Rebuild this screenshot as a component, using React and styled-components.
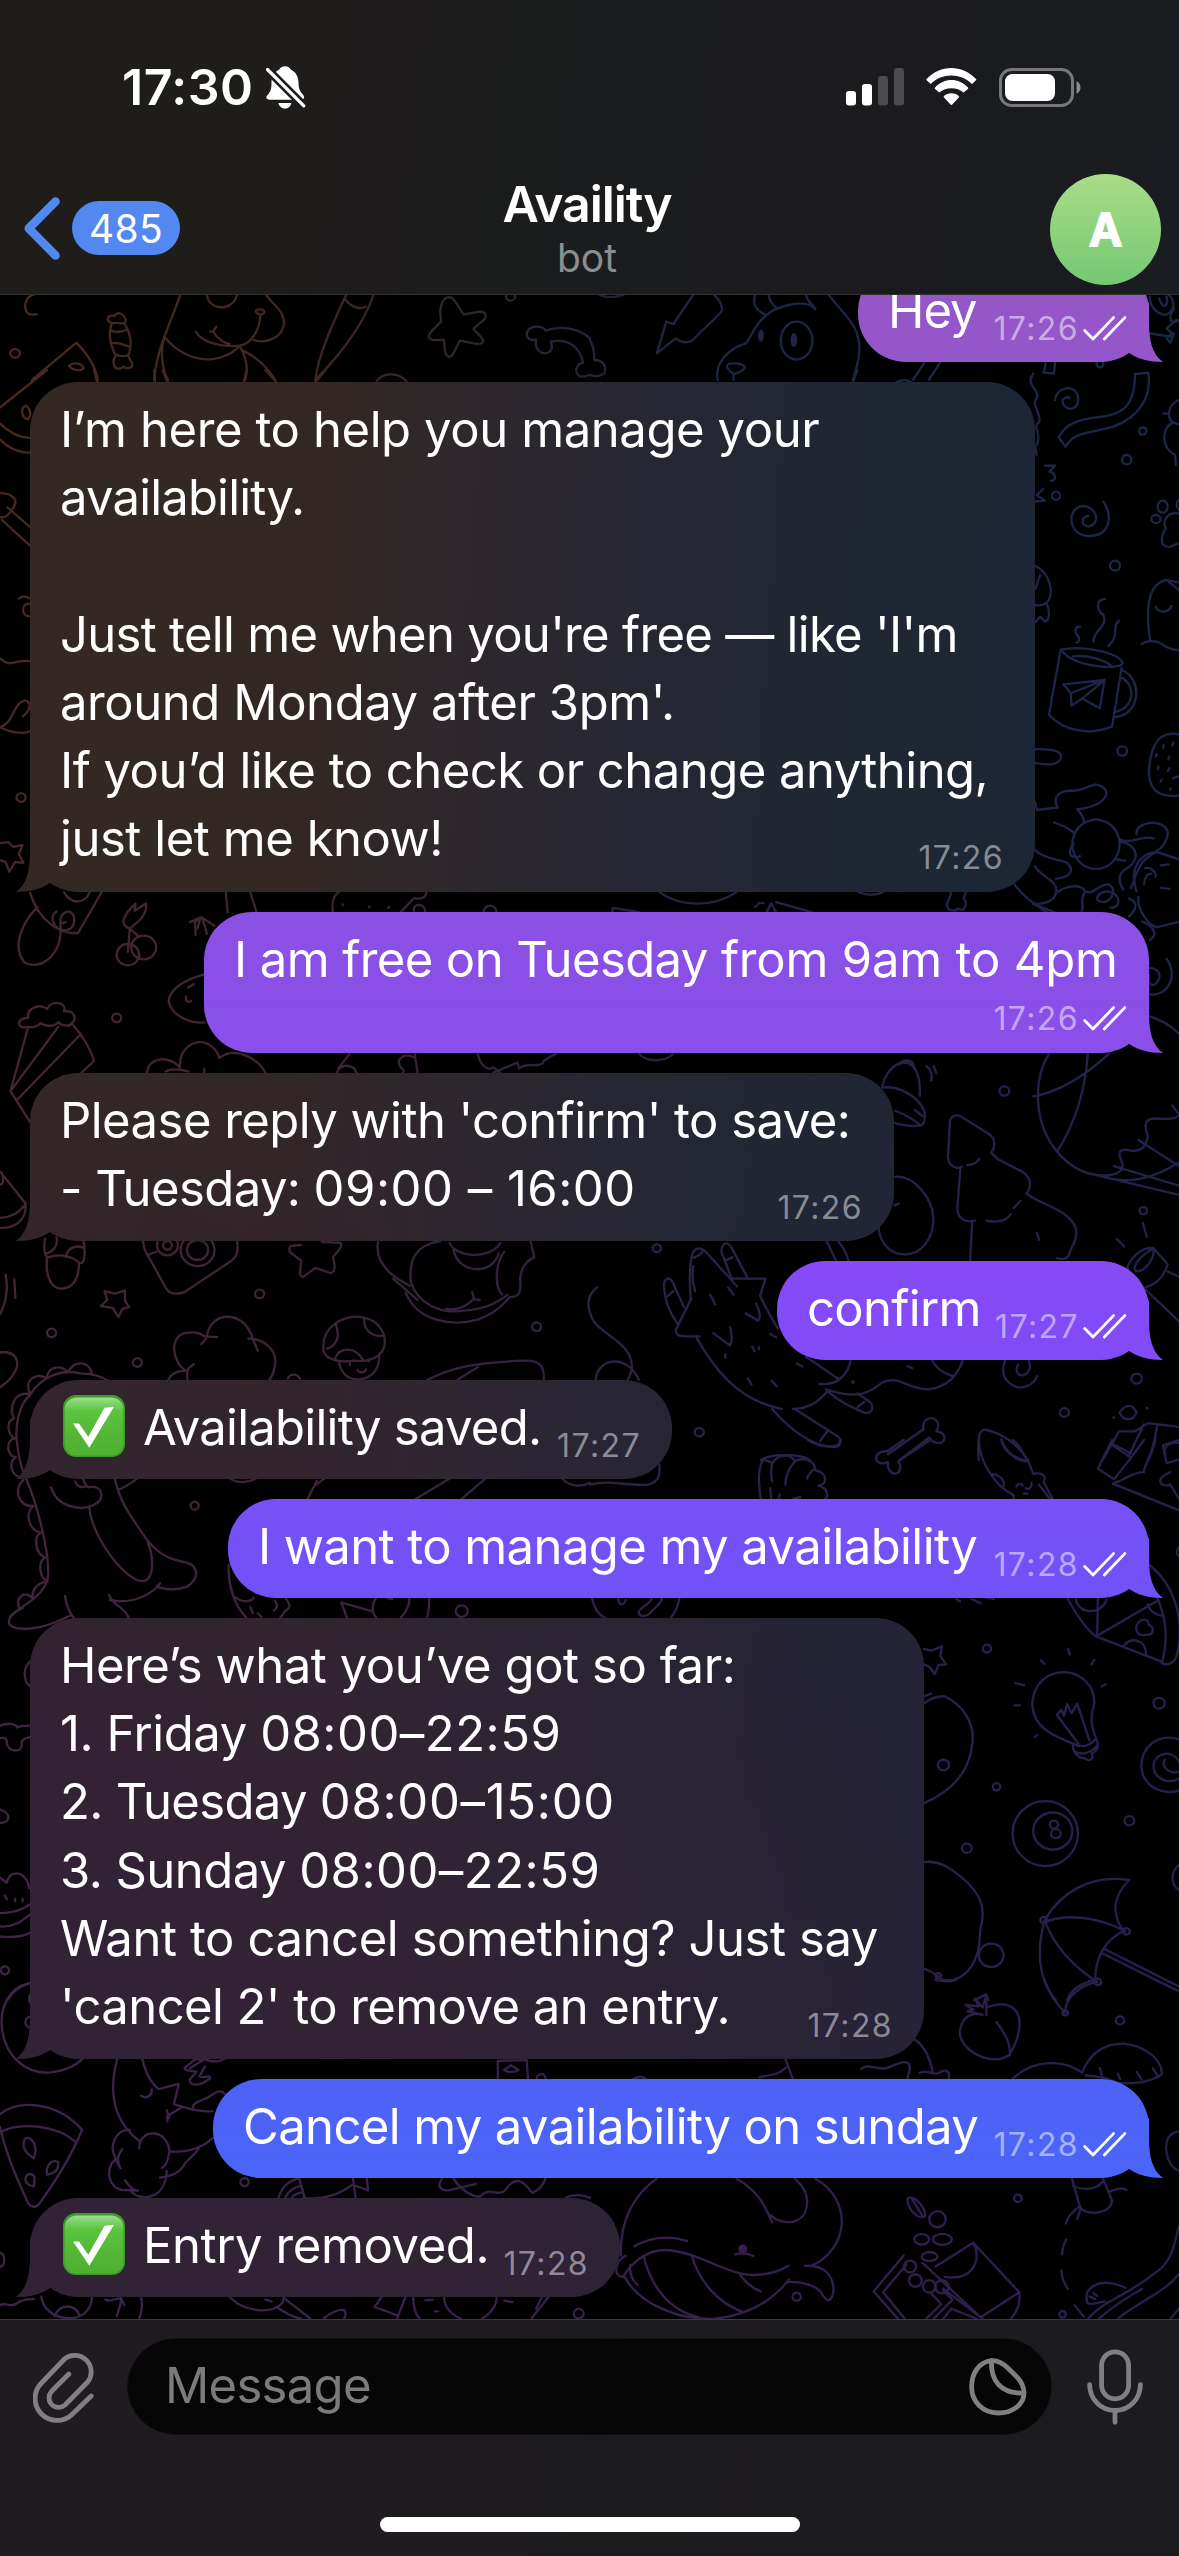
import React from "react";
import styled, { createGlobalStyle, css } from "styled-components";

const GlobalStyle = createGlobalStyle`
  * { box-sizing: border-box; }
  body {
    margin: 0;
    background: #000;
    color: #fff;
    font-family: Inter, "Liberation Sans", sans-serif;
  }
`;

/* ---------- wallpaper ---------- */

const LEFT_X = 0.37628;
const RIGHT_X = 0.37564;

/* Each tile is a patch of the doodle wallpaper with its own origin and scale. */
const TILES = [
  {
    at: [0, 0], scale: [LEFT_X, 1 / 3],
    d: `M90 884 C60 890 60 945 85 944 L97 943
    M290 965 C280 950 295 945 305 948 C310 935 325 940 330 950 C340 965 330 972 320 970 C305 965 300 975 290 965 M296 973 C288 1000 292 1030 305 1062 M330 970 C345 995 352 1030 342 1065 C330 1070 318 1070 305 1062 M293 990 C305 1000 325 995 335 990 M296 1030 C315 1025 330 1035 342 1040 M307 1068 C300 1080 300 1090 305 1100 C310 1110 325 1105 328 1100 C335 1108 350 1105 352 1095 C352 1085 345 1080 340 1068
    M85 1140 L203 1028 C235 1065 255 1105 260 1140 M183 1098 C195 1085 220 1090 222 1105 C215 1115 195 1112 183 1098
    M480 884 L437 1010 C420 1060 412 1100 410 1140 M437 1010 C425 1050 430 1110 447 1140 M437 1010 C470 1060 520 1080 560 1078 C590 1075 620 1060 636 1037 M550 884 C555 935 620 935 630 884 M520 995 C540 1030 590 1042 636 1037 M575 980 L566 995 L558 995 M566 995 C580 1020 600 1030 610 1032 M636 1037 C660 1035 690 1000 692 945 M680 935 C678 925 705 925 702 938 C698 948 685 945 680 935 M707 884 C725 915 755 930 755 970 C750 1020 700 1030 674 1020 M636 1037 C655 1070 660 1110 652 1140 M645 1052 C680 1070 710 1100 732 1140
    M920 884 C880 980 845 1070 838 1140 M993 884 C960 990 890 1080 842 1135 M916 895 C930 920 955 930 972 920
    M1170 935 C1172 890 1195 880 1210 905 L1232 943 L1275 935 C1295 935 1295 955 1280 965 L1258 987 L1282 1015 C1290 1030 1275 1035 1260 1030 L1222 1022 L1205 1060 C1195 1078 1185 1070 1182 1050 L1180 1020 L1150 1020 C1135 1015 1137 1005 1150 990 L1172 965 Z
    M1450 992 C1440 975 1405 975 1400 1000 C1400 1020 1415 1022 1425 1018 C1420 1050 1440 1062 1450 1060 C1470 1055 1468 1040 1464 1025 C1510 1015 1540 1040 1550 1088 C1525 1095 1525 1130 1550 1130 L1568 1125 M1450 992 C1490 975 1540 985 1568 1015`,
    rings: [[40, 1060, 13], [1357, 890, 12]],
  },
  {
    at: [590, 0], scale: [RIGHT_X, 1 / 3],
    d: `M25 884 C45 895 70 892 90 884 M0 1020 C10 1040 12 1060 12 1080 C35 1080 45 1100 38 1120 C30 1130 10 1130 0 1125
    M275 884 L222 972 L203 965 L178 1060 L228 1015 C245 1030 260 1030 275 1020 C285 1000 340 955 352 930 C350 905 340 895 330 884
    M440 884 C430 915 445 935 470 945 C440 970 430 1010 415 1030 C370 1045 330 1090 340 1140 M475 884 C478 905 490 920 500 925 M470 945 C500 915 560 905 585 915 L600 927 C590 910 578 905 575 884 M635 884 C665 930 710 970 715 1020 C722 1060 710 1100 700 1140 M382 1140 V1122 C365 1110 360 1095 370 1092 C390 1088 410 1092 412 1100 C410 1112 395 1120 382 1122
    M860 1140 L890 1088 M902 1140 L932 1088
    M1490 890 C1490 930 1530 960 1545 935 C1560 920 1550 890 1540 884 M1515 895 C1525 930 1540 920 1535 890 M1490 1000 L1545 1010 M1555 925 C1535 960 1550 975 1568 960 M1560 960 L1535 985 L1550 1000 L1535 1015 L1545 1028 L1555 1000`,
    rings: [[550, 1022, 42, 57]],
    spots: [[543, 1020, 9, 21], [455, 1007, 8, 18]],
  },
  {
    at: [0, 370], scale: [LEFT_X, 1 / 2.8],
    d: `M0 105 L125 0 M250 0 L258 34 M410 0 L412 34 M432 0 L445 34 M655 0 L648 34 M705 0 L735 34 M838 34 L865 0 M1000 34 C1015 5 1060 5 1082 34
    M0 150 C30 180 60 190 80 190 M0 195 C25 222 55 232 80 232 M68 100 C55 105 55 135 75 138 C85 125 80 105 68 100
    M0 345 C30 345 45 360 40 375 C30 400 15 415 0 412 M20 385 L80 440 M5 420 L80 492
    M50 640 C60 632 72 635 80 640 M80 655 C55 650 55 692 80 690 M0 808 C30 835 40 810 80 815
    M0 1000 C40 985 30 940 65 925 C85 925 82 955 60 970 M0 1000 C25 1015 60 1020 80 1012
    M22 1322 L35 1335 L60 1330 L50 1355 L62 1380 L40 1378 L25 1405 L15 1378 L0 1372 M0 1325 L22 1322`,
    rings: [[56, 1197, 12]],
  },
  {
    at: [590, 370], scale: [RIGHT_X, 1 / 2.8],
    d: `M700 34 L712 0 M815 34 C830 27 845 27 855 34
    M1253 783 L1222 965 C1260 1010 1330 1025 1390 998 L1415 835 M1253 783 C1310 770 1410 790 1418 822 C1410 840 1290 835 1253 783 M1285 802 C1320 797 1370 810 1392 832 M1415 840 C1470 860 1470 965 1397 972 M1412 860 C1455 880 1450 945 1400 957
    M1260 880 L1370 868 L1357 947 L1310 920 L1282 940 L1280 905 Z M1370 868 L1280 905 M1370 868 L1310 920 L1282 940
    M1185 1062 C1250 1060 1260 1075 1252 1090 C1240 1110 1210 1105 1185 1100
    M1568 1020 C1500 1005 1490 1080 1488 1130 C1490 1190 1530 1195 1568 1192 M1527 1050 L1525 1058 M1553 1043 L1550 1052 M1509 1075 L1506 1082 M1542 1082 L1540 1090 M1513 1110 L1512 1118 M1543 1115 L1538 1123 M1522 1147 L1519 1153 M1545 1172 V1176 M1552 1143 L1568 1137
    M1185 1210 L1190 1232 L1245 1225 C1235 1205 1235 1180 1280 1178 C1320 1180 1340 1150 1360 1165 C1390 1180 1375 1220 1297 1230 C1310 1245 1315 1255 1315 1265 M1235 1267 C1260 1275 1275 1285 1288 1295 M1410 1315 C1440 1330 1470 1300 1500 1312 M1455 1300 C1450 1260 1540 1255 1538 1300 C1530 1350 1490 1350 1470 1380 C1450 1410 1450 1430 1440 1450 M1288 1325 C1270 1350 1275 1370 1305 1362 M1400 1370 L1425 1374 M1410 1320 C1460 1330 1465 1370 1430 1395 C1400 1410 1410 1440 1420 1455 M1185 1345 C1210 1370 1250 1370 1270 1380 C1290 1400 1280 1420 1240 1425 M1185 1390 C1200 1420 1250 1430 1240 1465 C1235 1490 1210 1495 1180 1495 L1235 1518 M1130 1440 C1150 1470 1175 1490 1215 1518 M1240 1465 C1270 1440 1310 1440 1318 1460 C1345 1470 1350 1440 1380 1440 C1400 1450 1395 1480 1370 1490 C1335 1490 1350 1460 1380 1460 C1420 1470 1410 1510 1385 1505 M1318 1460 C1300 1490 1320 1500 1308 1518
    M1455 1460 C1430 1380 1480 1350 1510 1350 L1568 1370 M1460 1475 C1455 1510 1490 1560 1510 1560 L1568 1545 M1435 1480 C1460 1490 1455 1510 1435 1530 M1475 1440 C1475 1420 1485 1410 1495 1410 M1478 1395 C1495 1390 1510 1410 1505 1418 M1520 1387 L1540 1384 M1520 1450 L1543 1453
    M185 1462 C240 1505 330 1505 390 1462 M715 1462 C740 1472 760 1472 780 1462 M960 1462 C965 1480 940 1490 955 1510 C970 1518 978 1510 980 1508 C1000 1520 1005 1490 995 1480 L1000 1462 M440 1503 L450 1493 L462 1493 M470 1518 L482 1493 L495 1518 M495 1490 L590 1518 M60 1518 V1506 L130 1518`,
    rings: [[1417, 1067, 13], [1347, 1328, 63, 69]],
  },
  {
    at: [780, 290], scale: [1 / 3, 1 / 3],
    d: `M790 248 L822 250 L825 218 M797 218 L792 248 M760 250 C735 285 775 295 772 320 C750 345 785 370 778 395 C755 410 785 430 772 460 L765 470 L770 495
    M825 330 C830 285 895 280 895 330 C890 370 845 360 848 330 C855 318 870 320 868 325
    M1065 252 C1065 370 1010 375 930 385 C870 395 850 415 836 443 L857 470 C880 425 930 430 1000 410 C1080 380 1115 320 1105 248 Z
    M795 527 L825 527 L808 545 C830 550 830 575 812 572 M790 597 L770 615 L795 632 L765 635
    M970 635 C1000 680 990 740 925 738 C860 735 860 650 910 648 C950 650 965 700 925 710 C900 705 905 680 925 678
    M1197 670 C1160 665 1145 695 1158 715 C1140 740 1140 775 1170 770 L1197 760 M1197 630 C1188 635 1188 650 1197 660
    M1197 330 C1160 345 1160 385 1180 398 C1145 410 1140 470 1185 495 L1188 525 M1150 370 L1168 372 M1180 398 L1197 403
    M1110 1050 C1100 980 1095 880 1160 870 L1197 878 M1085 1062 C1100 1050 1130 1050 1150 1065 C1165 1075 1180 1080 1197 1080 M1127 950 C1135 970 1165 970 1175 948 M1165 875 L1197 900
    M767 828 C810 850 825 910 800 938 C785 950 770 945 767 945 M780 855 L767 895 M800 938 C810 965 810 990 795 995 L780 980 L767 995
    M975 927 C945 930 950 960 970 975 C985 1010 940 1020 940 1055 M1018 992 C995 1000 1020 1040 985 1068 M900 1010 C880 1010 885 1030 895 1040 C900 1050 895 1057 890 1058`,
    rings: [[960, 222, 10], [1088, 423, 11], [1040, 509, 14], [828, 617, 12], [1005, 827, 15], [1148, 650, 15, 18], [1128, 687, 14, 12]],
  },
  {
    at: [0, 900], scale: [LEFT_X, 1 / 2.8],
    d: `M80 -20 C100 50 150 95 207 93 L270 -22 M170 -22 C190 15 225 10 238 -20 M100 20 C60 60 30 130 65 175 C110 200 170 150 160 65 M175 62 C150 75 160 30 185 32 C205 45 200 80 175 85 C140 85 130 45 150 32
    M340 145 L345 80 C320 70 320 50 360 10 L358 30 L388 10 C392 40 370 60 345 80 L370 103
    M535 48 L570 72 M535 48 L505 62 M535 48 L518 62 L520 98 M532 52 L525 80 M538 52 L550 95
    M600 -22 L605 34 M665 -22 L682 34 M885 34 C880 0 890 -15 900 -22 M1065 34 L1100 -5 C1120 0 1135 -10 1132 -22 M1100 30 C1095 10 1130 5 1130 34 M1285 34 C1290 10 1315 10 1320 34 M910 12 L912 14 M980 18 L982 20 M1032 22 L1034 20
    M543 208 C500 220 450 245 448 285 C460 330 510 345 543 343 M500 245 L515 235 M495 270 C490 285 505 288 508 282
    M75 355 L28 535 L80 622 M190 345 C220 380 240 415 250 450 L215 485 M75 355 C45 365 40 330 75 330 C70 300 110 290 125 305 C140 275 180 290 170 312 C200 305 205 340 190 345 C185 358 160 350 155 342 C140 360 115 350 108 345 C100 355 85 358 75 355 M155 355 L28 535 M215 375 L45 560
    M390 484 C395 440 445 435 475 465 M440 480 C455 470 480 475 500 480 M478 470 C475 410 520 390 550 402 C575 415 580 430 583 442 C630 405 690 450 705 484 M543 472 V484
    M895 484 C905 455 940 460 948 484 M900 470 L930 430 M1070 484 C1080 470 1060 480 1060 450 C1070 430 1090 435 1098 440 M1102 430 L1110 484 M1270 430 C1275 465 1300 480 1310 468 L1330 484 M1310 484 L1375 455 L1380 472 C1400 450 1440 475 1445 450 L1478 430
    M0 760 L68 850 C72 900 35 920 0 918 M68 850 C50 880 20 890 0 890 M0 795 C10 800 10 780 5 765
    M120 948 C115 975 118 1000 130 1000 C155 990 190 995 210 1015 C225 1025 228 990 222 955 M125 1005 C120 1060 140 1090 165 1088 C200 1085 210 1050 210 1015 M150 945 C155 970 140 985 122 990 M175 1000 C180 970 205 965 225 975 M15 1050 C22 1090 15 1130 0 1160 M38 1062 L41 1115
    M380 955 L385 980 L440 1085 C450 1105 470 1105 490 1098 L615 1010 C635 995 632 970 630 955 M390 995 L415 985
    M268 1137 L285 1120 L278 1095 L305 1102 L332 1093 L332 1122 L343 1140 L325 1145 L315 1168 L300 1142 Z
    M855 957 L905 960 C910 970 905 975 885 1000 C888 1020 895 1035 880 1045 L838 1030 L805 1056 C790 1050 800 1035 800 1010 L770 985 C765 965 775 968 800 966
    M1005 955 C995 1010 1030 1050 1090 1080 M1170 955 C1110 965 1085 1000 1092 1070 C1110 1130 1170 1160 1230 1150 C1300 1145 1330 1120 1350 1105 M1078 1100 C1110 1180 1200 1195 1270 1175 C1320 1155 1340 1130 1355 1112 C1385 1112 1385 1090 1382 1060 C1385 1030 1400 1010 1420 1000 L1410 955 M1340 985 C1320 1010 1310 1080 1335 1105 M1195 960 C1210 1000 1300 1010 1330 960 M1205 980 C1220 1050 1310 1050 1325 990 M1255 1098 L1260 1118 L1275 1120 M1260 1115 C1240 1140 1210 1150 1185 1145 M1045 1060 L1110 1120
    M498 1344 C495 1315 500 1310 515 1300 M495 1318 C460 1300 445 1220 495 1212 C520 1208 530 1212 545 1222 L577 1224 M550 1225 L535 1243 M550 1220 C560 1150 650 1145 672 1230 L685 1262 M660 1228 C700 1228 740 1260 730 1305 C728 1325 722 1335 715 1344 M447 1344 C455 1325 475 1318 495 1318 M765 1340 C770 1325 790 1325 797 1340
    M860 1265 C850 1190 920 1160 960 1168 C1010 1175 1030 1220 1020 1255 C1010 1285 970 1295 940 1290 C910 1295 870 1290 860 1265 M892 1188 C905 1220 895 1250 868 1256 M968 1170 C965 1205 990 1225 1020 1220 M890 1285 C900 1255 940 1245 965 1288 M900 1290 C905 1330 930 1344 955 1342 C990 1340 1010 1310 1008 1270 M930 1298 V1302 M980 1286 V1292 M950 1316 C955 1325 970 1325 973 1314
    M1135 1344 C1200 1310 1260 1295 1390 1290 C1430 1288 1448 1300 1445 1344 M1270 1308 L1215 1344 M0 1267 C40 1262 55 1290 40 1320 C30 1345 10 1355 0 1365`,
    rings: [[340, 153, 30], [382, 133, 33], [310, 330, 12], [445, 967, 28], [445, 967, 12], [525, 980, 45], [525, 980, 28], [137, 1212, 12], [690, 1103, 12], [365, 1295, 12], [1426, 1195, 12]],
  },
  {
    at: [0, 1340], scale: [1 / 3, 1 / 3],
    d: `M90 165 C60 190 45 250 50 300 C55 350 65 390 80 420 C110 490 145 620 145 700 C140 770 70 790 30 830 M90 165 C120 115 180 85 240 100 C280 100 305 110 325 122
    M90 160 C70 120 110 95 140 115 C145 75 185 75 205 98 C220 55 275 65 275 103 M85 162 C45 155 25 200 42 235 C15 245 25 290 45 295 C15 300 20 350 48 352 C25 360 30 410 65 412 M70 420 C40 450 55 500 100 498 C75 520 85 570 122 578 C100 590 105 640 135 652 C115 665 115 710 143 725 M140 725 C110 730 95 750 98 775 C75 750 45 770 58 805
    M153 442 C170 500 240 515 280 495 C315 480 310 440 275 440 C265 445 255 440 250 418 M225 425 C232 440 245 445 260 438
    M267 500 C275 580 350 690 410 720 C440 730 450 715 455 690 C460 650 450 625 440 598 M345 418 C360 490 400 540 440 598 C480 650 520 660 560 668 C600 680 595 720 560 740 C530 752 500 750 470 740 L480 730 M475 738 C430 780 380 790 330 780 M327 765 C340 800 375 800 387 835 M195 768 C200 800 210 820 222 835 M355 450 C375 440 395 430 410 417`,
    rings: [[584, 497, 12]],
  },
  {
    at: [590, 900], scale: [RIGHT_X, 1 / 2.8],
    d: `M1488 210 C1485 240 1500 245 1510 230 C1525 210 1510 190 1488 190 M1535 165 C1565 205 1545 270 1488 265 M1488 325 C1520 335 1550 355 1568 375 M1470 60 C1500 75 1515 95 1490 112 M130 430 C150 455 200 455 222 430
    M778 520 C790 480 810 455 840 455 C870 460 880 500 878 548 M825 460 C830 445 860 445 862 465 M778 525 C820 520 870 545 890 590 C895 625 885 632 875 632 C850 635 830 630 812 625 M812 590 C840 600 870 620 880 632 M865 588 L885 605 M895 465 C908 475 912 490 908 505 M915 465 L922 485
    M958 620 C962 600 980 600 990 608 L1062 655 C1080 670 1080 690 1068 708 L1085 725 L1140 755 C1175 770 1178 800 1162 822 C1200 855 1290 870 1295 930 C1295 960 1275 980 1275 995 C1265 1010 1255 1005 1243 1003 M958 620 L953 720 C955 745 975 755 990 747 M1005 742 C1020 742 1030 735 1037 724 M986 752 L978 860 C978 890 995 905 1025 898 M1055 898 C1090 905 1110 895 1120 880 M1128 862 L1146 842 M1017 905 L1012 1010 M1190 932 L1196 952
    M812 775 C860 770 910 830 914 890 C915 950 880 995 835 992 C790 990 770 950 768 915 M810 855 L822 850
    M1222 430 C1180 500 1180 620 1240 700 C1270 740 1310 765 1350 770 C1390 775 1420 765 1418 740 C1410 720 1400 695 1430 700 C1470 710 1480 690 1485 660 C1470 620 1485 610 1510 612 C1545 615 1565 610 1568 600 M1325 430 C1320 530 1290 630 1243 705 M1180 550 C1260 535 1330 480 1382 430 M1350 770 C1430 800 1500 780 1568 735 M1395 745 L1568 800 M1340 768 L1568 826 M1460 672 L1568 745 M1550 575 L1568 600
    M1430 1030 C1440 1000 1470 970 1500 975 L1538 1020 C1530 1050 1510 1075 1478 1085 M1430 1030 L1445 1060 M1500 975 C1505 1000 1480 1040 1455 1040 C1440 1030 1460 1000 1500 975 M1538 1040 L1568 1055 M1478 1090 L1568 1180 M1403 950 L1422 970 M1472 905 L1482 943
    M197 1085 C195 1055 215 1055 220 1070 L250 1140 M197 1085 C200 1130 215 1160 232 1185 M205 1110 L222 1095 M270 1115 L228 1205 C230 1220 240 1222 255 1222 L292 1222 M268 1115 C265 1070 265 1010 275 985 C285 970 300 975 308 985 L392 1082 M270 1000 C280 1005 300 990 300 980 M275 1025 C270 1060 275 1080 280 1095 M375 1060 L467 1060 L453 1108 C470 1150 490 1180 500 1200 M378 1062 L350 985 C350 960 365 955 375 970 L418 1055 M360 1010 L380 1000 M285 1228 C330 1310 390 1400 510 1425 M320 1105 L333 1132 M368 1085 L382 1105 M415 1158 L448 1178 C455 1170 452 1150 442 1130 M328 1212 L372 1247 C378 1240 378 1220 373 1197 M480 1215 L495 1224 M432 1250 L438 1264 M450 1253 V1258 M360 1272 V1282 M420 1340 L430 1356 M483 1345 L497 1362 M550 1298 L565 1306 M575 1280 C610 1300 640 1330 665 1342 M695 1287 C685 1330 660 1360 610 1355 M540 1425 C580 1425 610 1405 632 1375 M628 1370 C720 1400 740 1380 780 1350 C830 1330 840 1370 900 1370 C950 1365 980 1330 993 1287 M910 1287 C920 1310 940 1325 965 1333 M845 1305 L858 1311 M632 1375 C660 1400 690 1420 735 1437 C755 1435 755 1415 745 1405 L712 1382 M712 1420 L730 1405 M485 1425 C530 1480 590 1530 650 1532 C670 1530 670 1510 660 1502 L545 1425 M613 1515 C620 1505 625 1495 632 1488
    M18 1085 C-10 1110 -10 1140 10 1180 C50 1230 110 1240 112 1310 C108 1330 105 1335 100 1344 M15 1344 C20 1280 100 1270 130 1344
    M1140 1300 C1130 1320 1140 1335 1155 1330 C1175 1320 1172 1300 1168 1290 M1105 1290 C1085 1340 1130 1375 1160 1362 C1180 1355 1185 1345 1190 1333 M630 955 L655 1010 M660 955 C680 980 685 995 688 1010
    M888 1482 C882 1455 905 1445 920 1455 C930 1465 928 1480 922 1487 C945 1490 950 1510 935 1520 C915 1522 908 1515 903 1505 L825 1568 M888 1482 L793 1552
    M1035 1512 C1035 1485 1050 1480 1060 1485 C1100 1495 1140 1525 1165 1568 M1095 1510 C1100 1540 1120 1560 1165 1572 M1035 1512 C1033 1530 1033 1550 1035 1568
    M1410 1435 C1425 1410 1445 1410 1455 1435 C1445 1460 1420 1460 1410 1435 M1365 1568 L1408 1488 L1450 1488 L1485 1465 L1568 1475 M1510 1470 C1505 1500 1500 1540 1485 1568 M1475 1468 L1435 1555 M1385 1520 L1440 1550 M1568 1520 C1540 1515 1525 1535 1530 1550 M1393 1448 L1395 1450 M1482 1422 L1484 1424 M455 1568 C480 1550 560 1550 585 1568`,
    rings: [[1103, 535, 13], [1473, 870, 10], [178, 975, 11], [1455, 1340, 14], [1263, 1435, 12], [291, 1490, 12], [700, 1350, 2]],
  },
  {
    at: [0, 1440], scale: [LEFT_X, 1 / 2.8],
    d: `M190 490 C150 510 100 535 45 527 C10 520 20 490 60 470 M80 620 C60 640 62 675 80 690
    M0 800 C20 790 45 795 45 805 C55 800 70 800 80 800 M0 835 C15 830 20 840 18 850 C25 875 55 875 58 855 C55 840 65 835 80 832 M0 1035 C30 1045 30 1070 0 1073
    M0 1225 L18 1240 C25 1200 70 1205 78 1255 M0 1325 C30 1325 60 1315 80 1300 M0 1362 C40 1365 60 1345 80 1328 M0 1390 C40 1395 60 1390 80 1380 M12 1275 L18 1285 M40 1285 V1292 M60 1285 V1292 M80 1520 C50 1530 30 1550 20 1568
    M608 350 C605 400 620 460 655 498 M625 440 C650 460 670 450 675 441 M760 445 C775 465 770 470 755 482 L745 498 M730 450 C740 460 735 475 728 477 M665 468 L672 485 M685 485 L695 495 M907 455 L990 480 M907 455 L922 498 M1000 498 C985 480 990 455 1000 441 M1025 441 L1042 446 M1140 441 C1142 470 1138 485 1135 498 M1065 498 C1080 480 1088 465 1088 445
    M612 108 C630 122 660 120 680 108 M817 165 L842 115 M840 125 L862 108 M1105 165 L1195 108 M1227 165 L1290 108 M1495 108 C1510 130 1545 132 1568 120`,
    rings: [[13, 1485, 11], [1227, 479, 16]],
  },
  {
    at: [590, 1440], scale: [RIGHT_X, 1 / 2.8],
    d: `M0 125 C50 110 100 130 155 125 C190 115 185 90 185 70 M580 0 C610 20 640 20 660 15 L668 0
    M455 165 C445 110 450 60 465 55 L485 65 C500 40 535 35 545 60 C570 45 600 60 600 85 C630 90 635 125 608 128 C635 135 635 160 625 165 M485 65 C480 90 483 110 485 115 M545 60 C525 85 520 110 520 125 M600 80 C585 90 580 100 578 108 M480 135 L482 165 M505 152 L503 165 M540 165 L560 160
    M790 32 C770 30 755 45 765 60 C775 70 785 65 793 62 C790 90 810 100 822 90 C830 75 825 65 820 60 L905 0 M790 32 L835 0
    M1035 0 C1035 60 1080 130 1128 155 V165 M1095 0 C1110 40 1140 60 1165 60 C1150 30 1140 10 1125 0 M1165 55 L1180 95 C1205 90 1215 100 1208 118 L1232 165 M1195 125 L1225 165 M1070 95 C1100 100 1105 120 1100 130 M1135 130 C1140 120 1150 122 1152 128 M1175 120 C1178 135 1165 140 1160 135 M1155 150 L1165 150
    M1390 0 L1352 80 L1395 110 L1440 50 M1385 10 L1440 50 L1475 0 M1505 0 C1495 50 1470 80 1475 90 C1440 90 1430 110 1392 122 L1568 197 M1525 15 L1568 0 M1525 15 L1535 65 L1568 55 M1545 90 C1500 110 1520 135 1545 125 L1568 165
    M1270 441 C1290 480 1320 530 1347 550 L1525 622 M1347 550 L1510 450 M1350 550 L1352 441 M1293 445 C1300 490 1360 490 1375 448 M1490 350 C1550 400 1590 500 1560 610 C1550 630 1530 630 1522 625 C1540 560 1535 500 1510 441 M1420 578 C1435 550 1480 555 1480 600 M1485 460 C1490 480 1505 490 1525 492 M1455 520 C1465 495 1490 500 1487 517 C1505 525 1500 550 1480 545 C1465 550 1450 540 1455 520
    M975 445 L985 452 M1015 445 L1040 457 M1055 441 L1075 445 M889 585 L908 590 L937 578 L933 605 L948 628 L928 630 L918 655 L903 635 L889 628
    M1285 850 C1240 830 1180 810 1177 740 C1180 680 1220 650 1262 650 C1310 652 1345 690 1342 740 C1330 780 1335 800 1347 835 M1285 850 C1310 865 1335 855 1347 835 C1360 860 1345 875 1335 878 C1345 895 1325 900 1320 892 C1290 890 1285 865 1285 850 M1290 872 C1310 885 1335 875 1350 855 M1300 850 L1243 770 L1255 755 L1262 772 L1270 740 L1282 765 L1297 738 L1330 842
    M1200 616 L1210 627 M1273 585 L1277 600 M1343 615 L1335 628 M1132 681 L1155 686 M1362 690 L1373 684 M1130 743 H1145 M1185 832 L1190 825
    M889 737 C905 725 925 715 945 718 C990 740 1025 790 1018 850 C1010 930 960 985 889 1017 M889 718 L908 710
    M1568 838 C1510 820 1465 860 1468 920 C1475 970 1520 995 1568 982 M1568 948 C1540 965 1500 950 1500 910 C1505 875 1550 865 1568 900 M1568 930 C1540 935 1520 915 1530 895
    M889 1182 C930 1175 960 1200 990 1225 C1040 1270 1055 1310 1040 1365 C1035 1395 1040 1420 1030 1440 C1015 1490 980 1520 940 1512 C920 1500 920 1490 889 1480
    M1435 1232 C1330 1215 1250 1270 1210 1345 C1190 1420 1190 1510 1240 1568 M1435 1232 C1390 1280 1390 1330 1420 1375 C1380 1395 1345 1440 1345 1510 C1310 1520 1280 1540 1270 1568 M1210 1350 C1270 1325 1350 1335 1425 1375 M1213 1352 C1235 1410 1280 1470 1350 1517 M1370 1425 L1568 1530 M1365 1438 L1560 1540 M1568 1190 C1545 1210 1545 1245 1568 1260 M1568 300 C1560 310 1560 320 1568 325
    M5 441 C10 470 25 490 40 498 M75 441 C75 465 90 465 95 448 M130 480 C140 465 165 455 165 441 M130 480 C130 498 150 495 160 485 C175 465 190 460 192 441 M238 441 C235 470 225 485 215 498 M1022 1568 L1040 1560 L1055 1552 L1060 1568`,
    rings: [[1057, 584, 11], [1515, 737, 15], [941, 910, 15], [1082, 971, 10], [1436, 1066, 13], [1003, 1143, 13], [1212, 1102, 87, 91], [1232, 1095, 52], [1235, 1077, 11], [1240, 1102, 13], [1068, 1443, 33], [927, 1500, 7], [1208, 1344, 9], [1428, 1376, 9], [1352, 1517, 9]],
  },
  {
    at: [0, 1980], scale: [LEFT_X, 1 / 2.722],
    d: `M80 8 C20 20 0 80 5 130 C15 220 80 255 130 252 C170 248 200 235 220 214 M80 40 C75 50 78 60 80 62 M80 100 C65 100 62 125 80 130
    M0 365 C50 325 150 330 218 408 C190 480 140 560 105 608 C95 622 85 620 75 608 C50 550 20 490 0 400 M0 415 C50 385 150 395 200 440 M65 435 C75 420 95 440 95 465 L90 485 C75 475 55 460 65 435 M125 530 C120 500 145 485 155 497 C155 520 145 525 125 530 M68 540 C70 525 90 525 92 540 L90 562 C75 560 65 550 68 540
    M312 214 C280 330 320 400 372 440 M378 214 C385 245 400 280 422 297 L475 283 L462 338 C500 350 530 360 565 357 M375 315 C390 325 405 315 403 298 M485 345 L445 370 L445 385 M443 355 L450 375 M370 458 C370 400 450 405 450 470 C445 480 450 500 430 512 M345 408 C310 405 290 450 305 480 C310 500 318 505 320 512 M325 460 C310 480 310 495 320 512 M305 490 C280 510 285 570 330 572 L367 573 M332 545 C345 565 355 575 367 573 M345 572 C370 605 440 600 443 520 M450 467 C500 470 540 455 565 430 M530 455 C510 490 500 480 485 510 C475 525 450 535 425 538 M512 350 C510 330 540 330 560 315 C580 300 590 300 597 310
    M490 240 L520 215 L540 218 L505 240 M490 240 C495 250 510 245 522 250 L505 270 C500 285 525 295 558 268 C560 255 535 270 530 262 L545 235 M545 216 C565 225 580 225 597 214 M0 742 C15 748 15 775 0 782
    M1323 269 V220 L1400 218 L1403 269 M1340 245 L1358 232 L1378 245 C1365 252 1350 252 1340 245 M1427 269 C1425 252 1450 252 1450 269
    M740 593 C750 560 770 545 795 540 M758 593 C765 575 780 565 800 560 M775 593 C782 583 790 580 803 578 M795 540 L810 593 M805 593 C860 600 900 585 940 555 M938 540 L945 593 M975 540 L978 573 L945 560 M1175 540 C1160 560 1170 575 1195 572 L1265 555 M1205 540 C1220 565 1250 590 1275 590 C1300 560 1320 590 1340 575 C1370 530 1390 545 1415 580 C1435 570 1445 555 1450 540 M1503 593 C1520 583 1550 583 1568 593
    M0 885 C20 875 25 895 45 880 C60 868 75 870 90 868 M110 862 C115 930 240 950 245 862 M145 915 C160 880 200 880 212 915 M280 870 C300 880 310 860 322 870 C320 890 315 900 310 915 M320 862 L330 885 M375 862 C380 890 375 905 370 922 M610 862 C650 905 720 910 750 880 L755 862 M757 868 L825 922 M735 890 C770 915 790 920 800 922 M705 870 L722 875 M860 922 C880 905 890 900 905 898 C920 895 920 910 915 922 M1015 862 L995 890 L1055 912 M1078 862 L1055 922 M1098 862 C1098 890 1105 910 1115 922 M1180 862 C1180 890 1200 910 1225 922 M1320 862 C1320 890 1300 910 1280 922 M1130 872 L1150 870 M1155 902 H1165 M1340 873 L1362 877 M1458 862 L1412 922 M1440 862 L1425 895`,
    rings: [[650, 550, 11], [1538, 908, 13]],
  },
  {
    at: [590, 1980], scale: [RIGHT_X, 1 / 2.722],
    d: `M520 214 L540 269 M450 265 C480 258 500 260 522 238 M722 242 C740 225 760 245 790 240 C815 230 840 215 850 230 C855 250 845 260 845 269 M865 162 C895 185 905 215 912 250 M878 252 C900 245 900 255 925 255 C945 240 960 245 955 269
    M1045 95 C1000 80 975 130 988 160 C1010 210 1080 230 1115 205 C1150 150 1150 100 1130 80 C1110 60 1080 65 1055 75 M1045 95 L1005 85 L1020 80 L1000 68 L1035 72 L1025 50 L1045 75 L1055 42 L1055 95 M1082 115 C1110 150 1120 180 1118 205
    M1210 0 C1220 30 1240 65 1265 88 C1265 50 1300 15 1350 5 M1505 0 L1568 30 M920 0 C940 5 960 5 975 0
    M1125 269 C1180 215 1260 215 1310 252 C1330 200 1370 172 1420 173 C1480 178 1525 220 1522 257 C1480 285 1420 285 1380 275 M1320 260 C1350 262 1370 265 1395 275 M1358 240 L1363 262 M1455 250 L1468 270 M1498 240 L1510 258 M1405 255 L1412 270 M115 269 C130 262 140 262 150 269
    M178 540 C110 590 80 660 82 750 M390 540 C440 570 460 600 485 660 M480 640 C510 670 580 670 578 600 C575 570 560 555 545 540 M600 540 C700 600 690 730 590 778 M572 778 C620 775 650 800 648 850 C640 885 625 870 615 850 C600 830 560 820 525 822 M118 725 C160 700 210 695 258 710 M95 750 C60 770 65 810 88 808 C110 770 150 735 200 735 C290 740 360 800 430 803 C480 803 510 790 528 778 M92 808 C130 880 230 925 330 922 C410 915 480 880 530 815 M107 775 C105 800 115 820 127 830 M143 750 C160 830 210 900 290 918 M270 748 C290 820 340 880 410 905 M400 803 C415 825 435 840 455 848 M387 747 C400 742 420 745 435 751
    M845 595 C860 580 895 620 892 642 C880 655 845 630 845 595 M858 598 L884 640
    M835 750 L755 848 L820 922 M842 775 L780 850 L838 922 M920 780 L1020 715 L1143 850 L1040 918 L885 770 M1020 715 C1045 760 1020 820 945 808 M1143 850 C1145 880 1140 900 1120 922 M940 845 L965 870 L915 922 M905 850 L935 882 L895 922 M962 895 L1030 922 M962 895 L940 922 M940 840 L1045 922
    M1283 540 L1305 620 C1320 640 1385 640 1390 600 L1365 540 M1285 560 C1320 575 1350 570 1368 545 M1380 578 C1400 568 1415 565 1428 571 M1305 615 C1285 630 1270 645 1267 663 M1307 620 L1297 650 M1268 707 C1260 720 1257 735 1257 747 M1255 790 C1255 810 1265 830 1272 840 M1290 885 L1315 917 M1325 922 C1370 870 1430 860 1500 800 C1550 770 1555 720 1568 670 M1355 922 C1400 880 1440 860 1470 840 M1405 922 C1470 870 1530 850 1568 800 M1325 880 C1310 840 1350 820 1385 825 C1400 828 1415 832 1425 838 M1325 880 C1335 885 1345 880 1370 875 M1330 862 L1345 868 M1340 852 L1350 860 M1545 922 L1568 895
    M1568 412 C1540 415 1530 440 1535 470 C1540 500 1555 515 1568 520`,
    rings: [[1411, 110, 11], [1265, 89, 7], [550, 862, 11], [1139, 594, 10], [1258, 910, 9], [925, 651, 22], [883, 706, 20, 14], [938, 706, 25, 15], [904, 753, 21, 12], [852, 780, 16], [866, 818, 17], [903, 834, 17], [937, 835, 18]],
    spots: [[407, 732, 12, 12]],
  },
];

const WallpaperSvg = styled.svg`
  position: absolute;
  inset: 0;
  width: 100%;
  height: 100%;
`;

function Wallpaper() {
  return (
    <WallpaperSvg viewBox="0 295 1179 2024" aria-hidden="true">
      <defs>
        <linearGradient id="warm" x1="0" x2="1" y1="0" y2="0">
          <stop offset="0" stopColor="#48291f" />
          <stop offset="0.3" stopColor="#3b2624" />
          <stop offset="0.48" stopColor="#252338" />
          <stop offset="0.65" stopColor="#1d2542" />
          <stop offset="1" stopColor="#1c2748" />
        </linearGradient>
        <linearGradient id="cool" x1="0" x2="1" y1="0" y2="0">
          <stop offset="0" stopColor="#3e2449" />
          <stop offset="0.55" stopColor="#37204c" />
          <stop offset="1" stopColor="#281e4f" />
        </linearGradient>
        <linearGradient id="fade" x1="0" x2="0" y1="0" y2="1">
          <stop offset="0.05" stopColor="#000" />
          <stop offset="0.9" stopColor="#fff" />
        </linearGradient>
        <mask id="fadeMask" maskUnits="userSpaceOnUse" x="0" y="295" width="1179" height="2024">
          <rect x="0" y="295" width="1179" height="2024" fill="url(#fade)" />
        </mask>
        <mask id="doodles" maskUnits="userSpaceOnUse" x="0" y="295" width="1179" height="2024">
          <g fill="none" stroke="#fff" strokeWidth="2.3" strokeLinecap="round" strokeLinejoin="round">
            {TILES.map((t, i) => (
              <g key={i} transform={`translate(${t.at[0]} ${t.at[1]}) scale(${t.scale[0]} ${t.scale[1]})`}>
                <path d={t.d} vectorEffect="non-scaling-stroke" />
                {t.rings.map(([cx, cy, rx, ry], k) => (
                  <ellipse key={k} cx={cx} cy={cy} rx={rx} ry={ry || rx} vectorEffect="non-scaling-stroke" />
                ))}
                {(t.spots || []).map(([cx, cy, rx, ry], k) => (
                  <ellipse key={k} cx={cx} cy={cy} rx={rx} ry={ry} fill="#fff" stroke="none" />
                ))}
              </g>
            ))}
          </g>
        </mask>
      </defs>
      <g mask="url(#doodles)">
        <rect x="0" y="295" width="1179" height="2024" fill="url(#warm)" />
        <rect x="0" y="295" width="1179" height="2024" fill="url(#cool)" mask="url(#fadeMask)" />
      </g>
    </WallpaperSvg>
  );
}

/* ---------- shell ---------- */

const Screen = styled.main`
  width: 1179px;
  height: 2556px;
  display: flex;
  flex-direction: column;
  overflow: hidden;
  background: #000;
`;

const Header = styled.header`
  flex: none;
  height: 295px;
  border-bottom: 1px solid #313132;
  background: linear-gradient(97deg, #1e1d1b 0%, #1e1d1a 24%, #1e1b1d 33%, #1c1c1c 38%, #1b1c1e 58%, #1b1b1f 78%, #191c20 100%);
`;

const StatusBar = styled.div`
  height: 174px;
  padding: 0 98px 0 122px;
  display: flex;
  align-items: center;
  justify-content: space-between;
`;

const StatusGroup = styled.div`
  display: flex;
  align-items: center;
  gap: ${(p) => p.$gap}px;
`;

const Clock = styled.time`
  font-size: 50px;
  font-weight: 600;
  line-height: 60px;
  letter-spacing: 0.5px;
`;

const NavBar = styled.nav`
  height: 120px;
  padding: 0 18px 9px 24px;
  display: grid;
  grid-template-columns: 1fr auto 1fr;
  align-items: center;
`;

const BackButton = styled.button`
  justify-self: start;
  display: flex;
  align-items: center;
  gap: 12px;
  padding: 0 0 3px;
  border: 0;
  background: none;
  color: #5288f0;
  font: inherit;
`;

const UnreadBadge = styled.span`
  width: 108px;
  height: 54px;
  border-radius: 27px;
  background: #5288f0;
  color: #fff;
  font-size: 39px;
  line-height: 55px;
  letter-spacing: 0.3px;
  text-align: center;
`;

const Peer = styled.div`
  align-self: start;
  margin-right: 11px;
  display: flex;
  flex-direction: column;
  align-items: center;
`;

const PeerName = styled.h1`
  margin: 0;
  font-size: 50px;
  font-weight: 600;
  line-height: 60px;
  letter-spacing: -1.1px;
`;

const PeerKind = styled.span`
  color: #8c8d8f;
  font-size: 39px;
  line-height: 47px;
`;

const Avatar = styled.div`
  justify-self: end;
  width: 111px;
  height: 111px;
  border-radius: 50%;
  background: linear-gradient(#aadc87, #74c873);
  display: flex;
  align-items: center;
  justify-content: center;
  font-size: 45px;
  font-weight: 600;
  -webkit-text-stroke: 2px #fff;
  paint-order: stroke;
`;

/* ---------- messages ---------- */

const Chat = styled.section`
  position: relative;
  flex: none;
  height: 2024px;
  overflow: hidden;
  display: flex;
  flex-direction: column;
  justify-content: flex-end;
  gap: 20px;
  padding: 0 30px 22px;
`;

const incomingFill = css`
  background:
    radial-gradient(1000px 1500px at 0px 2350px, #322235 35%, rgba(50, 34, 53, 0) 100%),
    radial-gradient(900px 1500px at 1179px 2350px, #272236 30%, rgba(39, 34, 54, 0) 100%),
    linear-gradient(94deg, #332923 0%, #332723 25%, #2e272c 37%, #272733 50%, #202634 66%, #1a2635 90%);
  background-attachment: fixed;
`;

const outgoingFill = css`
  background: linear-gradient(#9658c4 250px, #9456c9 340px, #8b50e4 920px, #8a4eeb 1050px, #844af7 1310px, #7850f8 1500px, #7052f7 1590px, #4f61f7 2080px, #4a65f8 2178px);
  background-attachment: fixed;
`;

const Bubble = styled.article`
  position: relative;
  flex: none;
  align-self: ${(p) => (p.$out ? "flex-end" : "flex-start")};
  width: ${(p) => p.$width}px;
  height: ${(p) => p.$height}px;
  padding: ${(p) => (p.$out ? "14px 22px 0 30px" : "14px 31px 0 30px")};
  border-radius: 48px;
  display: flex;
  flex-direction: column;
  ${(p) => (p.$out ? outgoingFill : incomingFill)}
`;

const Tail = styled.span`
  position: absolute;
  bottom: 0;
  width: 48px;
  height: 60px;
  ${(p) =>
    p.$out
      ? css`
          right: -14px;
          clip-path: path("M34 0 V20 C34 38 37 52 48 60 C34 60 23 57 14 51 L0 30 Z");
          ${outgoingFill}
        `
      : css`
          left: -14px;
          clip-path: path("M14 0 V20 C14 38 11 52 0 60 C14 60 25 57 34 51 L48 30 Z");
          ${incomingFill}
        `}
`;

const Row = styled.div`
  position: relative;
  display: flex;
  align-items: flex-end;
  justify-content: ${(p) => (p.$end ? "flex-end" : "space-between")};
  height: ${(p) => (p.$end ? "41px" : "68.2px")};
`;

const Line = styled.span`
  display: flex;
  font-size: 49px;
  line-height: 68.2px;
  white-space: pre;
`;

const Run = styled.span`
  letter-spacing: ${(p) => p.$track}px;
`;

const Meta = styled.span`
  display: flex;
  align-items: center;
  gap: 4px;
  height: ${(p) => (p.$low ? 31 : 34)}px;
`;

const SentAt = styled.time`
  font-size: 32px;
  line-height: 33px;
  letter-spacing: 1.4px;
  color: rgba(255, 255, 255, ${(p) => (p.$out ? 0.52 : 0.47)});
`;

const CheckEmojiSvg = styled.svg`
  width: 62px;
  height: 62px;
  margin: 1px 18px 0 3px;
`;

function CheckEmoji() {
  return (
    <CheckEmojiSvg viewBox="0 0 62 62">
      <defs>
        <linearGradient id="emojiFace" x1="0" y1="0" x2="0" y2="1">
          <stop offset="0" stopColor="#9be08c" />
          <stop offset="0.1" stopColor="#7fd36c" />
          <stop offset="0.24" stopColor="#5bc43f" />
          <stop offset="0.6" stopColor="#53b836" />
          <stop offset="1" stopColor="#4fb031" />
        </linearGradient>
      </defs>
      <rect width="62" height="62" rx="13" fill="#3f9a28" />
      <rect x="1.6" y="2.4" width="58.8" height="58" rx="12" fill="url(#emojiFace)" />
      <path d="M10 28.5 H16 L25.3 41.7 L41.5 12.8 L51 11.7 L26.3 52.7 Z" fill="#fff" />
    </CheckEmojiSvg>
  );
}

function ReadTicks() {
  return (
    <svg width="44" height="25" viewBox="0 0 44 25" fill="none" stroke="#fff" strokeWidth="2.8" strokeLinecap="round" strokeLinejoin="round">
      <path d="M1.7 14.6 L10 23 L30.5 1.6 M21.3 23 L41.8 1.6" />
    </svg>
  );
}

/* each line is a list of [text, tracking] runs; a final null puts the time on a row of its own */
const MESSAGES = [
  { out: true, width: 291, height: 99, at: "17:26", lines: [[["Hey", -1]]] },
  {
    width: 1005, height: 510, at: "17:26",
    lines: [
      [["I’m here to help you manage your", -0.41]],
      [["availability.", -0.82]],
      [],
      [["Just tell me when you're free — like 'I'm", -0.7]],
      [["around Monday after 3pm'.", -0.42]],
      [["If you’d like to check or change anything,", -0.53]],
      [["just let me know!", -0.45]],
    ],
  },
  { out: true, width: 945, height: 141, at: "17:26", lines: [[["I am free on Tuesday ", -0.6], ["from 9am to 4pm", -0.2]], null] },
  {
    width: 864, height: 168, at: "17:26",
    lines: [[["Please reply with 'confirm' to save:", -0.54]], [["- Tuesday: ", -0.58], ["09:00 – 16:00", 0.5]]],
  },
  { out: true, width: 372, height: 99, at: "17:27", lines: [[["confirm", -0.69]]] },
  { width: 642, height: 99, at: "17:27", check: true, lines: [[["Availability saved.", -0.74]]] },
  { out: true, width: 921, height: 99, at: "17:28", lines: [[["I want to manage my availability", -0.58]]] },
  {
    width: 894, height: 441, at: "17:28",
    lines: [
      [["Here’s what you’ve got so far:", -0.45]],
      [["1. Friday ", -0.44], ["08:00–22:59", 0.5]],
      [["2. Tuesday ", -0.68], ["08:00–15:00", 0.7]],
      [["3. Sunday ", -0.54], ["08:00–22:59", 0.5]],
      [["Want to cancel something? Just say", -0.42]],
      [["'cancel 2' to remove an entry.", -0.57]],
    ],
  },
  { out: true, width: 936, height: 99, at: "17:28", lines: [[["Cancel my availability on sunday", -0.62]]] },
  { width: 590, height: 99, at: "17:28", check: true, lines: [[["Entry removed.", -0.4]]] },
];

function Message({ out, width, height, at, check, lines }) {
  return (
    <Bubble $out={out} $width={width} $height={height}>
      <Tail $out={out} />
      {lines.map((line, i) => (
        <Row key={i} $end={!line}>
          {line && (
            <Line>
              {check && <CheckEmoji />}
              {line.map(([text, track]) => (
                <Run key={text} $track={track}>{text}</Run>
              ))}
            </Line>
          )}
          {i === lines.length - 1 && (
            <Meta $low={!out && lines.length > 1}>
              <SentAt $out={out}>{at}</SentAt>
              {out && <ReadTicks />}
            </Meta>
          )}
        </Row>
      ))}
    </Bubble>
  );
}

/* ---------- composer ---------- */

const Footer = styled.footer`
  flex: 1;
  border-top: 1px solid #3a393c;
  padding: 18px 0 24px;
  display: flex;
  flex-direction: column;
  justify-content: space-between;
  background: linear-gradient(93deg, #201b20 0%, #1f1b20 44%, #1b1b1e 50%, #1d1b1f 62%, #1c1b1f 100%);
`;

const Composer = styled.div`
  height: 97px;
  padding: 0 36px 0 33px;
  display: flex;
  align-items: center;
  justify-content: space-between;
  color: #808080;
`;

const Field = styled.div`
  width: 925px;
  height: 97px;
  margin-left: -3px;
  border-radius: 49px;
  border: 1px solid #111012;
  background: #060606;
  padding: 0 24px 0 37px;
  display: flex;
  align-items: center;
  justify-content: space-between;
`;

const Placeholder = styled.span`
  padding-bottom: 3px;
  color: #7b7b7b;
  font-size: 49px;
  letter-spacing: -0.69px;
`;

const HomeIndicator = styled.div`
  align-self: center;
  width: 420px;
  height: 15px;
  border-radius: 8px;
  background: #fff;
`;

const stroke = { fill: "none", stroke: "currentColor", strokeWidth: 4.8, strokeLinecap: "round", strokeLinejoin: "round" };

export default function App() {
  return (
    <>
      <GlobalStyle />
      <Screen>
        <Header>
          <StatusBar>
            <StatusGroup $gap={12}>
              <Clock>17:30</Clock>
              <svg width="40" height="43" viewBox="0 0 40 43">
                <path fill="#fff" d="M19 .3C22 .3 24 2 25 3.8C30 6 32.5 11 32.5 17C32.8 23 34 25.5 37 28.5C39 31 38.5 33.7 35 33.7H4C-.5 33.7 -.5 31 2 28.5C4.5 25.5 5.5 23 5.5 17C5.5 11 8 6 13 3.8C14 2 16 .3 19 .3Z M12.4 37H25.4C24.8 40.5 22 42.6 19 42.6S13 40.5 12.4 37Z" />
                <path d="M1.5 3.5 L37.8 39.8" stroke="#1e1d1b" strokeWidth="8.6" />
                <path d="M1.5 3.5 L37.8 39.8" stroke="#fff" strokeWidth="3.2" strokeLinecap="round" />
              </svg>
            </StatusGroup>
            <StatusGroup $gap={22}>
              <svg width="58" height="38" viewBox="0 0 58 38">
                <rect x="0" y="23" width="10" height="14.5" rx="3" fill="#fff" />
                <rect x="16" y="16" width="10" height="21.5" rx="3" fill="#fff" />
                <rect x="32" y="8" width="10" height="29.5" rx="3" fill="#4a4b4d" />
                <rect x="48" y="0" width="10" height="37.5" rx="3" fill="#4a4b4d" />
              </svg>
              <svg width="51" height="38" viewBox="0 0 51 38" fill="#fff">
                <path d="M.6 11C14.5 -3.6 36 -3.6 50 11Q50.6 11.6 50 12.3L46 16C34.5 4.7 16 4.7 4.7 16L.6 12.3Q0 11.6 .6 11Z" />
                <path d="M9 19.6C18 9.6 33 9.6 42 19.6Q42.6 20.3 42 21L37.6 24.6C31 18.7 20 18.7 13.2 24.6L9 21Q8.3 20.3 9 19.6Z" />
                <path d="M18 28C22 24.4 29 24.4 32.8 28Q33.6 28.8 32.8 29.6L26.3 36.6Q25.4 37.4 24.5 36.6L18 29.6Q17.2 28.8 18 28Z" />
              </svg>
              <svg width="82" height="39" viewBox="0 0 82 39">
                <rect x="1.5" y="1.5" width="72" height="36" rx="11" fill="none" stroke="#77787b" strokeWidth="3" />
                <rect x="6" y="6" width="50" height="27" rx="7.5" fill="#fff" />
                <path d="M77.5 13C80 14.5 81.5 16.5 81.5 19.5S80 24.5 77.5 26Z" fill="#8a8b8d" />
              </svg>
            </StatusGroup>
          </StatusBar>
          <NavBar>
            <BackButton>
              <svg width="36" height="63" viewBox="0 0 36 63" fill="none" stroke="currentColor" strokeWidth="8.6" strokeLinecap="round" strokeLinejoin="round">
                <path d="M31.5 4.5 L4.8 31.4 L31.5 58.4" />
              </svg>
              <UnreadBadge>485</UnreadBadge>
            </BackButton>
            <Peer>
              <PeerName>Availity</PeerName>
              <PeerKind>bot</PeerKind>
            </Peer>
            <Avatar>A</Avatar>
          </NavBar>
        </Header>

        <Chat>
          <Wallpaper />
          {MESSAGES.map((m, i) => (
            <Message key={i} {...m} />
          ))}
        </Chat>

        <Footer>
          <Composer>
            <svg width="62" height="72" viewBox="0 0 62 72" {...stroke}>
              <path d="M58.2 45 L39.5 63 A21.6 21.6 0 0 1 8.5 32 L31.5 8 A16.4 16.4 0 0 1 54.6 31 L32 54 A9.6 9.6 0 0 1 18.4 40.5 L35.8 23" />
            </svg>
            <Field>
              <Placeholder>Message</Placeholder>
              <svg width="58" height="58" viewBox="0 0 58 58" {...stroke}>
                <path d="M22.5 2.7 C10 4 2.6 15.5 2.6 28.5 C2.6 44 14 55 29 55 C43.5 55 55 46.5 55 35 C55 27.5 51.5 22.5 47 18 L38.5 9.8 C33 4.5 28.5 2 22.5 2.7 Z" />
                <path d="M22.5 2.7 C21.5 22 31 35.8 54.6 35" />
              </svg>
            </Field>
            <svg width="56" height="76" viewBox="0 0 56 76" {...stroke}>
              <rect x="14.6" y="2.8" width="27" height="47" rx="13.5" />
              <path d="M2.6 35.6 C2.6 50 13.5 61.5 28 61.5 S53.4 50 53.4 35.6 M28 61.5 V73.3" />
            </svg>
          </Composer>
          <HomeIndicator />
        </Footer>
      </Screen>
    </>
  );
}
